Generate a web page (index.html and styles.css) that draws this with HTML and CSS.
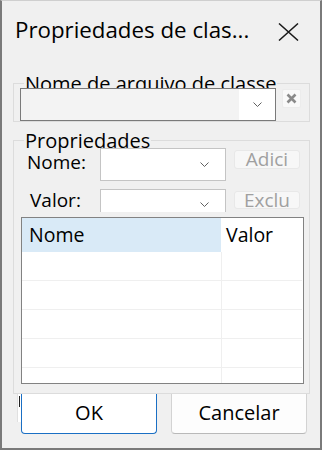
FILE: index.html
```html
<!DOCTYPE html>
<html lang="pt">
<head>
    <meta charset="UTF-8">
    <meta name="viewport" content="width=device-width, initial-scale=1.0">
    <title>Propriedades de classe</title>
    <link rel="stylesheet" href="styles.css">
</head>
<body>
    <div class="window">
        <div class="titlebar">
            <span class="title">Propriedades de clas...</span>
            <svg class="close" width="21" height="18" viewBox="0 0 21 18">
                <path d="M1 0.5 L20 17.5 M20 0.5 L1 17.5" stroke="#1a1a1a" stroke-width="1.5" fill="none"/>
            </svg>
        </div>

        <div class="group group-file">
            <div class="legend">Nome de arquivo de classe</div>
            <div class="file-row">
                <div class="combo combo-file">
                    <span class="combo-field"></span>
                    <span class="combo-arrow">
                        <svg width="9" height="5" viewBox="0 0 9 5"><path d="M0.5 0.5 L4.5 4.5 L8.5 0.5" stroke="#606060" fill="none"/></svg>
                    </span>
                </div>
                <button class="clear-btn">
                    <svg width="11" height="11" viewBox="0 0 11 11"><path d="M1.5 1.5 L9.5 9.5 M9.5 1.5 L1.5 9.5" stroke="#8a8a8a" stroke-width="2.6" fill="none"/></svg>
                </button>
            </div>
        </div>

        <div class="group group-props">
            <div class="legend">Propriedades</div>
            <div class="prop-row row-name">
                <span class="prop-label">Nome:</span>
                <div class="combo combo-prop">
                    <span class="combo-arrow">
                        <svg width="9" height="5" viewBox="0 0 9 5"><path d="M0.5 0.5 L4.5 4.5 L8.5 0.5" stroke="#606060" fill="none"/></svg>
                    </span>
                </div>
                <button class="small-btn">Adici</button>
            </div>
            <div class="prop-row row-value">
                <span class="prop-label">Valor:</span>
                <div class="combo combo-prop combo-cut">
                    <span class="combo-arrow">
                        <svg width="9" height="5" viewBox="0 0 9 5"><path d="M0.5 0.5 L4.5 4.5 L8.5 0.5" stroke="#606060" fill="none"/></svg>
                    </span>
                </div>
                <button class="small-btn">Exclu</button>
            </div>
            <div class="list">
                <div class="list-head">
                    <div class="col-name">Nome</div>
                    <div class="col-value">Valor</div>
                </div>
                <div class="list-row"><div class="col-name"></div><div class="col-value"></div></div>
                <div class="list-row"><div class="col-name"></div><div class="col-value"></div></div>
                <div class="list-row"><div class="col-name"></div><div class="col-value"></div></div>
                <div class="list-row"><div class="col-name"></div><div class="col-value"></div></div>
                <div class="list-row"><div class="col-name"></div><div class="col-value"></div></div>
            </div>
        </div>

        <div class="buttons">
            <span class="stub"></span>
            <button class="btn btn-ok">OK</button>
            <button class="btn btn-cancel">Cancelar</button>
        </div>
    </div>
</body>
</html>
```

FILE: styles.css
```css
body {
    margin: 0;
    font-family: "Open Sans", "Noto Sans", sans-serif;
    color: #000;
}
.window {
    box-sizing: border-box;
    width: 322px;
    height: 450px;
    background: #f0f0f0;
    border: 2px solid #7a7a7a;
    border-top: 1px solid #cfcfcf;
    overflow: hidden;
}
.titlebar {
    box-sizing: border-box;
    height: 82px;
    display: flex;
    align-items: flex-start;
    padding-left: 13px;
}
.title {
    font-size: 22.3px;
    line-height: 32px;
    margin-top: 13px;
    white-space: nowrap;
}
.close {
    margin-left: auto;
    margin-right: 21px;
    margin-top: 22px;
}
.group {
    border: 1px solid #dcdcdc;
    margin: 0 10px 0 11px;
    padding: 0 0 0 6px;
}
.legend {
    width: fit-content;
    font-size: 20px;
    line-height: 20px;
    height: 20px;
    margin: -10px 0 0 4px;
    padding: 0 1px;
    background: #f0f0f0;
    white-space: nowrap;
}
.file-row {
    display: flex;
    align-items: flex-start;
    margin-top: -6px;
}
.combo {
    box-sizing: border-box;
    display: flex;
    background: #fff;
    border: 1px solid #adadad;
}
.combo-file {
    width: 256px;
    height: 33px;
    border-color: #7a7a7a;
}
.combo-field {
    width: 218px;
    background: #f3f3f3;
}
.combo-arrow {
    flex: 1;
    display: flex;
    align-items: center;
    justify-content: center;
}
.combo-file .combo-arrow { padding-left: 1px; }
.clear-btn {
    box-sizing: border-box;
    width: 19px;
    height: 19px;
    margin: 1px 0 0 6px;
    padding: 0;
    border: 1px solid #ececec;
    border-radius: 2px;
    background: #f9f9f9;
    display: flex;
    align-items: center;
    justify-content: center;
}
.group-file {
    height: 37px;
}
.group-props {
    margin-top: 18px;
    padding-bottom: 9px;
}
.prop-row {
    display: flex;
    align-items: flex-start;
}
.row-name {
    margin-top: -3px;
    height: 33px;
}
.row-value {
    margin-top: 8px;
    height: 23px;
}
.prop-label {
    font-size: 19px;
    line-height: 20px;
}
.row-name .prop-label {
    width: 73px;
    margin: 4px 0 0 7px;
}
.row-value .prop-label {
    width: 70px;
    margin: 1px 0 0 10px;
}
.combo-prop {
    width: 126px;
    height: 33px;
    justify-content: flex-end;
    border-color: #c4c4c4;
}
.combo-prop .combo-arrow {
    flex: none;
    width: 30px;
    padding-right: 6px;
}
.combo-cut {
    height: 23px;
    border-bottom: none;
}
.combo-cut .combo-arrow {
    align-items: flex-end;
    padding-bottom: 5px;
}
.small-btn {
    box-sizing: border-box;
    width: 66px;
    height: 19px;
    margin: 2px 0 0 8px;
    padding: 0;
    font-family: inherit;
    font-size: 19px;
    line-height: 17px;
    color: #a0a0a0;
    text-align: center;
    white-space: nowrap;
    background: #f7f7f7;
    border: 1px solid #e8e8e8;
    border-radius: 3px;
}
.row-value .small-btn {
    height: 18px;
    margin-top: 2px;
}
.list {
    box-sizing: border-box;
    width: 283px;
    height: 167px;
    margin: 5px 0 0 1px;
    border: 1px solid #828282;
    background: #fff;
    overflow: hidden;
}
.list-head,
.list-row {
    display: flex;
}
.list-head {
    height: 34px;
    font-size: 19.5px;
    line-height: 34px;
}
.list-head .col-name {
    background: #d9eaf7;
    padding-left: 7px;
}
.list-head .col-value {
    padding-left: 4px;
}
.col-name {
    box-sizing: border-box;
    width: 199px;
}
.col-value {
    flex: 1;
    border-left: 1px solid #efefef;
}
.list-head .col-value {
    border-left-color: #fff;
}
.list-row {
    box-sizing: border-box;
    height: 29px;
    border-bottom: 1px solid #efefef;
    margin-right: 1px;
}
.buttons {
    display: flex;
    align-items: flex-start;
    padding-left: 15px;
}
.stub {
    box-sizing: border-box;
    width: 4px;
    height: 28px;
    background: #fff;
    border-left: 1px solid #e0e0e0;
    position: relative;
}
.stub::after {
    content: "";
    position: absolute;
    left: 1px;
    top: 2px;
    width: 1px;
    height: 11px;
    background: #222;
}
.btn {
    box-sizing: border-box;
    width: 136px;
    height: 40px;
    padding: 0 0 3px;
    font-family: inherit;
    font-size: 20px;
    color: #000;
    background: #fdfdfd;
    border: 1px solid #d3d3d3;
    border-top: none;
    border-bottom-color: #b9b9b9;
    border-radius: 0 0 4px 4px;
}
.btn-ok {
    background: #fff;
    border-color: #1a6fc4;
}
.btn-cancel {
    margin-left: 14px;
}
```
